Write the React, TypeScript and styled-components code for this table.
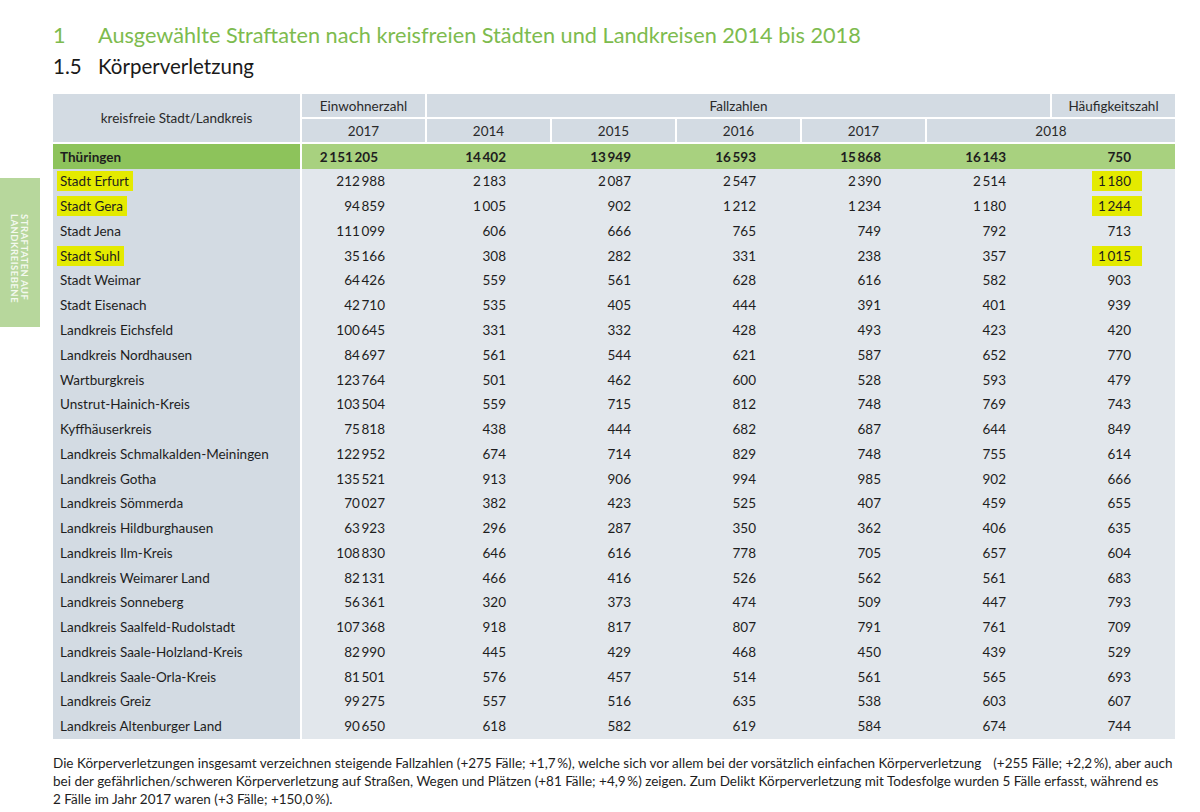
import React from "react";
import styled, { createGlobalStyle, css } from "styled-components";

const GlobalStyle = createGlobalStyle`
  html, body { margin: 0; padding: 0; background: #ffffff; }
  body { font-family: Lato, "Open Sans", sans-serif; color: #222; }
`;

const NS = "\u2009";

type Row = { name: string; hl?: boolean; v: string[]; hz: string; hzHl?: boolean };

const rows: Row[] = [
  { name: "Stadt Erfurt", hl: true, v: [`212${NS}988`, `2${NS}183`, `2${NS}087`, `2${NS}547`, `2${NS}390`, `2${NS}514`], hz: `1${NS}180`, hzHl: true },
  { name: "Stadt Gera", hl: true, v: [`94${NS}859`, `1${NS}005`, "902", `1${NS}212`, `1${NS}234`, `1${NS}180`], hz: `1${NS}244`, hzHl: true },
  { name: "Stadt Jena", v: [`111${NS}099`, "606", "666", "765", "749", "792"], hz: "713" },
  { name: "Stadt Suhl", hl: true, v: [`35${NS}166`, "308", "282", "331", "238", "357"], hz: `1${NS}015`, hzHl: true },
  { name: "Stadt Weimar", v: [`64${NS}426`, "559", "561", "628", "616", "582"], hz: "903" },
  { name: "Stadt Eisenach", v: [`42${NS}710`, "535", "405", "444", "391", "401"], hz: "939" },
  { name: "Landkreis Eichsfeld", v: [`100${NS}645`, "331", "332", "428", "493", "423"], hz: "420" },
  { name: "Landkreis Nordhausen", v: [`84${NS}697`, "561", "544", "621", "587", "652"], hz: "770" },
  { name: "Wartburgkreis", v: [`123${NS}764`, "501", "462", "600", "528", "593"], hz: "479" },
  { name: "Unstrut-Hainich-Kreis", v: [`103${NS}504`, "559", "715", "812", "748", "769"], hz: "743" },
  { name: "Kyffhäuserkreis", v: [`75${NS}818`, "438", "444", "682", "687", "644"], hz: "849" },
  { name: "Landkreis Schmalkalden-Meiningen", v: [`122${NS}952`, "674", "714", "829", "748", "755"], hz: "614" },
  { name: "Landkreis Gotha", v: [`135${NS}521`, "913", "906", "994", "985", "902"], hz: "666" },
  { name: "Landkreis Sömmerda", v: [`70${NS}027`, "382", "423", "525", "407", "459"], hz: "655" },
  { name: "Landkreis Hildburghausen", v: [`63${NS}923`, "296", "287", "350", "362", "406"], hz: "635" },
  { name: "Landkreis Ilm-Kreis", v: [`108${NS}830`, "646", "616", "778", "705", "657"], hz: "604" },
  { name: "Landkreis Weimarer Land", v: [`82${NS}131`, "466", "416", "526", "562", "561"], hz: "683" },
  { name: "Landkreis Sonneberg", v: [`56${NS}361`, "320", "373", "474", "509", "447"], hz: "793" },
  { name: "Landkreis Saalfeld-Rudolstadt", v: [`107${NS}368`, "918", "817", "807", "791", "761"], hz: "709" },
  { name: "Landkreis Saale-Holzland-Kreis", v: [`82${NS}990`, "445", "429", "468", "450", "439"], hz: "529" },
  { name: "Landkreis Saale-Orla-Kreis", v: [`81${NS}501`, "576", "457", "514", "561", "565"], hz: "693" },
  { name: "Landkreis Greiz", v: [`99${NS}275`, "557", "516", "635", "538", "603"], hz: "607" },
  { name: "Landkreis Altenburger Land", v: [`90${NS}650`, "618", "582", "619", "584", "674"], hz: "744" },
];

const Page = styled.div`
  display: flex;
  width: 1200px;
  min-height: 812px;
`;

const Rail = styled.aside`
  width: 40px;
  flex: 0 0 40px;
  padding-top: 178px;
`;

const SideTab = styled.div`
  height: 149px;
  background: #b7d79c;
  display: flex;
  align-items: center;
  justify-content: center;
`;

const SideText = styled.span`
  writing-mode: vertical-rl;
  color: #f4f9ef;
  font-family: Lato, sans-serif;
  font-weight: 700;
  font-size: 9.5px;
  line-height: 10px;
  letter-spacing: 0.5px;
  margin-top: 12px;
  margin-left: -2px;
`;

const Main = styled.main`
  margin-left: 13px;
  width: 1124px;
  padding-top: 22px;
`;

const Heading = styled.h1<{ $level: 1 | 2 }>`
  margin: 0;
  display: flex;
  font-weight: 400;
  font-family: Lato, sans-serif;
  ${(p) =>
    p.$level === 1
      ? css`
          color: #7dbb4e;
          font-size: 21.7px;
          line-height: 26px;
        `
      : css`
          color: #1a1a1a;
          font-size: 20.5px;
          line-height: 26px;
          margin-top: 5px;
        `}
`;

const HeadNum = styled.span`
  width: 45px;
  flex: 0 0 45px;
`;

const Grid = styled.div`
  margin-top: 15px;
  display: grid;
  grid-template-columns: 247px repeat(7, 125px);
  grid-template-rows: 25px 25px 25px repeat(23, 24.78px);
  font-size: 13.5px;
`;

const HeadCell = styled.div<{ $col: string; $row: string; $first?: boolean }>`
  grid-column: ${(p) => p.$col};
  grid-row: ${(p) => p.$row};
  background: #d3dbe3;
  color: #2a2a2a;
  display: flex;
  align-items: center;
  justify-content: center;
  border-bottom: 2px solid #fff;
  ${(p) => !p.$first && css`border-left: 2px solid #fff;`}
`;

const LabelCell = styled.div<{ $total?: boolean }>`
  grid-column: 1;
  background: ${(p) => (p.$total ? "#8dc35b" : "#d3dbe3")};
  display: flex;
  align-items: center;
  padding-left: 7px;
  font-weight: ${(p) => (p.$total ? 700 : 400)};
  color: #1e1e1e;
`;

const NumCell = styled.div<{ $total?: boolean; $first?: boolean; $pad?: number }>`
  background: ${(p) => (p.$total ? "#a8d17f" : "#e2e7ec")};
  display: flex;
  align-items: center;
  justify-content: flex-end;
  padding-right: ${(p) => p.$pad ?? 44}px;
  font-weight: ${(p) => (p.$total ? 700 : 400)};
  color: #1e1e1e;
  ${(p) => p.$first && css`border-left: 2px solid #fff;`}
`;

const Mark = styled.span<{ $num?: boolean }>`
  background: #e4ea00;
  padding: 2px 4px 2px 3px;
  margin-left: -3px;
  ${(p) =>
    p.$num &&
    css`
      padding: 2px 11px 2px 6px;
      margin-right: -11px;
    `}
`;

const Note = styled.p`
  margin: 15px 0 0 0;
  font-size: 13.5px;
  line-height: 18px;
  color: #1e1e1e;
  white-space: pre-line;
  width: 1135px;
`;

const Gap = styled.span`
  display: inline-block;
  width: 12px;
`;

export default function App() {
  return (
    <>
      <GlobalStyle />
      <Page>
        <Rail>
          <SideTab>
            <SideText>
              STRAFTATEN AUF
              <br />
              LANDKREISEBENE
            </SideText>
          </SideTab>
        </Rail>
        <Main>
          <Heading $level={1}>
            <HeadNum>1</HeadNum>
            <span>Ausgewählte Straftaten nach kreisfreien Städten und Landkreisen 2014 bis 2018</span>
          </Heading>
          <Heading as="h2" $level={2}>
            <HeadNum>1.5</HeadNum>
            <span>Körperverletzung</span>
          </Heading>
          <Grid>
            <HeadCell $col="1" $row="1 / span 2" $first>
              kreisfreie Stadt/Landkreis
            </HeadCell>
            <HeadCell $col="2" $row="1">Einwohnerzahl</HeadCell>
            <HeadCell $col="3 / span 5" $row="1">Fallzahlen</HeadCell>
            <HeadCell $col="8" $row="1">Häufigkeitszahl</HeadCell>
            <HeadCell $col="2" $row="2">2017</HeadCell>
            <HeadCell $col="3" $row="2">2014</HeadCell>
            <HeadCell $col="4" $row="2">2015</HeadCell>
            <HeadCell $col="5" $row="2">2016</HeadCell>
            <HeadCell $col="6" $row="2">2017</HeadCell>
            <HeadCell $col="7 / span 2" $row="2">2018</HeadCell>

            <LabelCell $total>Thüringen</LabelCell>
            <NumCell $total $first $pad={47}>{`2${NS}151${NS}205`}</NumCell>
            <NumCell $total>{`14${NS}402`}</NumCell>
            <NumCell $total>{`13${NS}949`}</NumCell>
            <NumCell $total>{`16${NS}593`}</NumCell>
            <NumCell $total>{`15${NS}868`}</NumCell>
            <NumCell $total>{`16${NS}143`}</NumCell>
            <NumCell $total>750</NumCell>

            {rows.map((r) => (
              <React.Fragment key={r.name}>
                <LabelCell>{r.hl ? <Mark>{r.name}</Mark> : r.name}</LabelCell>
                {r.v.map((val, i) => (
                  <NumCell key={i} $first={i === 0} $pad={i === 0 ? 40 : 44}>
                    {val}
                  </NumCell>
                ))}
                <NumCell>{r.hzHl ? <Mark $num>{r.hz}</Mark> : r.hz}</NumCell>
              </React.Fragment>
            ))}
          </Grid>
          <Note>
            Die Körperverletzungen insgesamt verzeichnen steigende Fallzahlen (+275 Fälle; +1,7{NS}%), welche sich vor allem bei der vorsätzlich einfachen Körperverletzung<Gap />(+255 Fälle; +2,2{NS}%), aber auch{"\n"}bei der gefährlichen/schweren Körperverletzung auf Straßen, Wegen und Plätzen (+81 Fälle; +4,9{NS}%) zeigen. Zum Delikt Körperverletzung mit Todesfolge wurden 5 Fälle erfasst, während es{"\n"}2 Fälle im Jahr 2017 waren (+3 Fälle; +150,0{NS}%).
          </Note>
        </Main>
      </Page>
    </>
  );
}
